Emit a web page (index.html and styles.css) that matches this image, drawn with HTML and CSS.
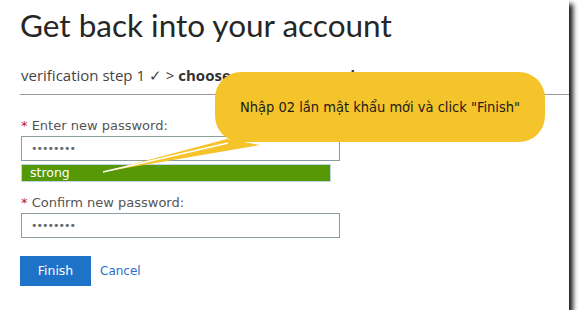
FILE: index.html
```html
<!DOCTYPE html>
<html>
<head>
<meta charset="utf-8">
<link rel="stylesheet" href="styles.css">
</head>
<body>
<div class="card">
  <h1 class="title">Get back into your account</h1>
  <div class="crumbs">verification step 1 ✓ &gt; <b>choose a new password</b></div>
  <div class="rule"></div>
  <form class="form">
    <label class="label"><span class="req">*</span> Enter new password:</label>
    <div class="input">••••••••</div>
    <div class="strength">strong</div>
    <label class="label label2"><span class="req">*</span> Confirm new password:</label>
    <div class="input">••••••••</div>
    <div class="actions">
      <span class="btn">Finish</span>
      <a class="cancel">Cancel</a>
    </div>
  </form>
  <div class="bubble">Nhập 02 lần mật khẩu mới và click "Finish"</div>
  <svg class="tail" width="160" height="40" viewBox="0 0 160 40"><polygon points="127,0 160,6 3,33" fill="#f5c42a"/><polyline points="3,33 128,4" stroke="#ffffff" stroke-width="1.5" fill="none"/></svg>
</div>
</body>
</html>
```
FILE: styles.css
```css
html, body { margin: 0; padding: 0; background: #fff; }
.card {
  position: relative;
  width: 569px;
  height: 310px;
  background: #fff;
  box-shadow: 4px 4px 5px rgba(0,0,0,0.9);
  box-sizing: border-box;
}
.title {
  margin: 0;
  padding: 6px 0 0 20px;
  font-family: "Lato", sans-serif;
  font-weight: 400;
  font-size: 31.5px;
  line-height: 38px;
  color: #262626;
}
.crumbs {
  margin-top: 21px;
  padding-left: 21px;
  font-family: "Open Sans", sans-serif;
  font-size: 15px;
  line-height: 20px;
  color: #444;
}
.crumbs b { color: #333; }
.rule {
  margin: 9px 0 0 20px;
  height: 1px;
  background: #999;
}
.form { padding: 23px 0 0 21px; font-family: "DejaVu Sans", sans-serif; }
.label { display: block; font-size: 13px; line-height: 16px; color: #555; }
.label2 { margin-top: 13px; }
.req { color: #b22; }
.input {
  margin-top: 2px;
  width: 308px;
  height: 23px;
  border: 1px solid #8a9e9e;
  font-size: 11px;
  line-height: 23px;
  padding-left: 9px;
  letter-spacing: -1px;
  color: #666;
}
.strength {
  margin-top: 3px;
  width: 300px;
  height: 16px;
  background: #569806;
  border: 1px solid #bcd6e6;
  color: #fff;
  font-size: 12.5px;
  line-height: 16px;
  padding-left: 8px;
}
.actions { margin-top: 18px; display: flex; align-items: center; gap: 9px; margin-left: -1px; }
.btn {
  display: inline-block;
  width: 71px;
  height: 30px;
  background: #1e72c8;
  color: #fff;
  text-align: center;
  font-size: 12.5px;
  line-height: 30px;
}
.cancel { color: #2a6fc9; font-size: 12px; }
.bubble {
  position: absolute;
  left: 215px;
  top: 72px;
  width: 330px;
  height: 70px;
  border-radius: 26px;
  background: #f5c42a;
  font-family: "DejaVu Sans Condensed", "DejaVu Sans", sans-serif;
  font-size: 14.5px;
  line-height: 70px;
  text-align: center;
  color: #1a1a1a;
}
.tail { position: absolute; left: 100px; top: 139px; }
```
